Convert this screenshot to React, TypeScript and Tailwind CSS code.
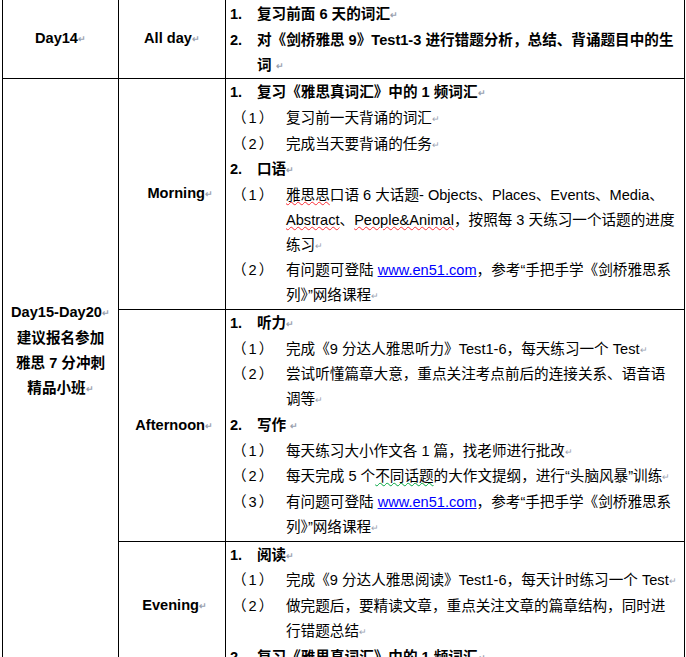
import React from "react";

const P = () => <span className="text-[9px] text-gray-400 align-middle">↵</span>;

const Head = ({ n, children }: { n: string; children: React.ReactNode }) => (
  <div className="flex font-bold">
    <span className="w-[27px] shrink-0">{n}</span>
    <span>{children}<P /></span>
  </div>
);

const Sub = ({ n, children }: { n: string; children: React.ReactNode }) => (
  <div className="flex">
    <span className="w-[56px] shrink-0 pl-[2px] tracking-[2px]">（{n}）</span>
    <span>{children}<P /></span>
  </div>
);

const Link = ({ children }: { children: React.ReactNode }) => (
  <span className="text-[#0000ff] underline">{children}</span>
);

const Red = ({ children }: { children: React.ReactNode }) => (
  <span className="underline decoration-wavy decoration-red-500 decoration-1">{children}</span>
);

export default function App() {
  const td = "border border-black align-middle";
  return (
    <div
      className="bg-white w-[686px] h-[657px] overflow-hidden text-[14.6px] leading-[25px] text-black"
      style={{ fontFamily: '"Liberation Sans", "Noto Sans CJK SC", sans-serif' }}
    >
      <table className="border-collapse table-fixed ml-[2px] -mt-[1px] w-[682px]">
        <colgroup>
          <col className="w-[116px]" />
          <col className="w-[107px]" />
          <col className="w-[459px]" />
        </colgroup>
        <tbody>
          <tr className="h-[77px]">
            <td className={`${td} text-center font-bold`}>Day14<P /></td>
            <td className={`${td} text-center font-bold`}>All day<P /></td>
            <td className={`${td} px-[4px] pt-[2px] pb-[0px]`}>
              <Head n="1.">复习前面 6 天的词汇</Head>
              <Head n="2.">对《剑桥雅思 9》Test1-3 进行错题分析，总结、背诵题目中的生词 </Head>
            </td>
          </tr>
          <tr className="h-[226px]">
            <td rowSpan={3} className={`${td} text-center font-bold`}>
              Day15-Day20<P />
              <br />建议报名参加
              <br />雅思 7 分冲刺
              <br />精品小班<P />
              <div className="h-[48px]" />
            </td>
            <td className={`${td} text-right pr-[12px] font-bold`}>Morning<P /></td>
            <td className={`${td} px-[4px] pt-[1px]`}>
              <Head n="1.">复习《雅思真词汇》中的 1 频词汇</Head>
              <Sub n="1">复习前一天背诵的词汇</Sub>
              <Sub n="2">完成当天要背诵的任务</Sub>
              <Head n="2.">口语</Head>
              <Sub n="1">
                <Red>雅思思</Red>口语 6 大话题- Objects、Places、Events、Media、<Red>Abstract</Red>、<Red>People&amp;Animal</Red>，按照每 3 天练习一个话题的进度练习
              </Sub>
              <Sub n="2">
                有问题可登陆 <Link>www.en51.com</Link>，参考“手把手学《剑桥雅思系列》”网络课程
              </Sub>
            </td>
          </tr>
          <tr className="h-[225px]">
            <td className={`${td} text-right pr-[12px] font-bold`}>Afternoon<P /></td>
            <td className={`${td} px-[4px] pt-[1px]`}>
              <Head n="1.">听力</Head>
              <Sub n="1">完成《9 分达人雅思听力》Test1-6，每天练习一个 Test</Sub>
              <Sub n="2">尝试听懂篇章大意，重点关注考点前后的连接关系、语音语调等</Sub>
              <Head n="2.">写作 </Head>
              <Sub n="1">每天练习大小作文各 1 篇，找老师进行批改</Sub>
              <Sub n="2">
                每天完成 5 个<span className="underline decoration-wavy decoration-green-600 decoration-1">不同话题</span>的大作文提纲，进行“头脑风暴”训练
              </Sub>
              <Sub n="3">
                有问题可登陆 <Link>www.en51.com</Link>，参考“手把手学《剑桥雅思系列》”网络课程
              </Sub>
            </td>
          </tr>
          <tr className="h-[125px]">
            <td className={`${td} text-right pr-[18px] font-bold`}>Evening<P /></td>
            <td className={`${td} px-[4px] pt-[1px]`}>
              <Head n="1.">阅读</Head>
              <Sub n="1">完成《9 分达人雅思阅读》Test1-6，每天计时练习一个 Test</Sub>
              <Sub n="2">做完题后，要精读文章，重点关注文章的篇章结构，同时进行错题总结</Sub>
              <Head n="2.">复习《雅思真词汇》中的 1 频词汇</Head>
            </td>
          </tr>
        </tbody>
      </table>
    </div>
  );
}
